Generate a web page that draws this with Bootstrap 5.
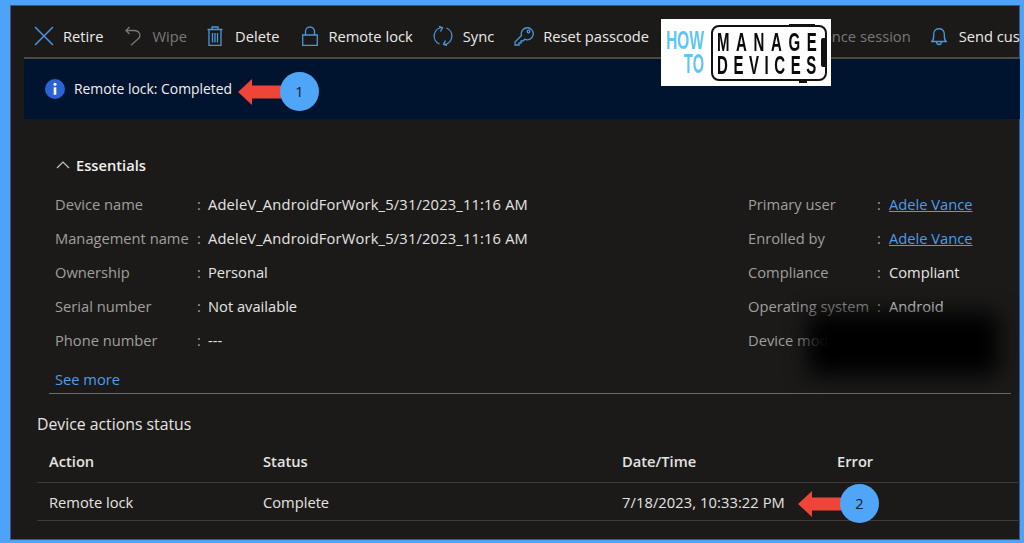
<!DOCTYPE html>
<html lang="en">
<head>
<meta charset="utf-8">
<title>Remote lock</title>
<link href="https://cdn.jsdelivr.net/npm/bootstrap@5.3.0/dist/css/bootstrap.min.css" rel="stylesheet">
<style>
html,body{height:100%;overflow:hidden}
body{background:#4da3f8;font-family:"Open Sans","Noto Sans",sans-serif;font-size:14.7px;color:#e6e4e2;padding:5px 4px 3px 10px}
.frame{position:relative;height:535px;background:#1b1a19;overflow:hidden;box-shadow:inset 0 0 0 1px #4a4f8a}
.tools{height:52px;padding-left:24px;padding-top:10px;white-space:nowrap;gap:20px;color:#eceae8}
.tool{gap:10px}
.tool.lead-tool{gap:9px;margin-right:1px}
.tool.slim{gap:12px}
.tool.lockish{margin-left:3px;gap:10px}
.tool.keyish{gap:9px}
.tool.hid{gap:8px}
.tool svg{flex:none}
.off{color:#7a7876}
.notice{margin-left:14px;height:62px;background:#01142f;border-top:2px solid #4b4a49;gap:9px;padding-left:21px;color:#f1f0ef;font-size:13.9px}
.ess{padding:34px 0 0 45px}
.ess-head{font-weight:600;gap:6px;height:24px;color:#f1f0ef}
.ess-head svg{margin-left:1px}
.ess-grid{margin-top:10px;width:950px}
.ess-col{flex:none}
.ess-col.one{width:693px}
.ess-row{height:34px;align-items:center}
.lab{color:#a19f9d}
.one .lab{width:142px}
.two .lab{width:129px}
.sep{width:11px;color:#a19f9d}
.two .sep{width:12px}
.nm{letter-spacing:.17px}
.lnk{color:#4f9ce8}
.lnk-u{color:#4f9ce8;text-decoration:underline}
.more{height:25px;margin-top:11px;display:block;text-decoration:none}
.rule{height:1px;background:#6b6a69;margin:0 9px 0 39px}
.sect{font-size:15.8px;margin:19px 0 0 27px;line-height:22px;color:#e6e4e2}
.acts{margin:8px 0 0 27px;width:983px;table-layout:fixed;--bs-table-bg:transparent;--bs-table-color:#e6e4e2;--bs-table-border-color:#3b3a39;color:#e6e4e2}
.acts th,.acts td{padding:0 0 0 12px;vertical-align:middle;font-weight:400}
.acts th{height:39px;font-weight:600;padding-bottom:2px}
.acts td{height:38px;padding-top:2px}
.acts tr{border-color:#3b3a39}
.stamp{letter-spacing:.08px}
.logo{position:absolute;left:651px;top:14px;width:170px;height:67px;background:#fff;z-index:3;font-family:"Liberation Sans",sans-serif;font-weight:700;white-space:nowrap}
.how{flex:none;width:43px;padding-top:10px;color:#5fc5f3;text-align:right}
.how span{display:block;transform-origin:right center}
.how .w1{font-size:25px;line-height:23px;transform:scaleX(.62);margin-left:-18px}
.how .w2{font-size:28px;line-height:24px;transform:scaleX(.52)}
.phone{position:relative;margin:6px 4px 5px 7px;flex:none;width:116px;border:2.5px solid #111;border-radius:8px;color:#0a0a0a;font-size:25px;line-height:23px;padding:4px 0 0 4px}
.phone span{display:block;transform-origin:left center;transform:scaleX(.6)}
.phone .l1{letter-spacing:11px}
.phone .l2{letter-spacing:9.300px}
.notch{position:absolute;right:-1px;top:11px;width:5px;height:29px;background:#111;border-radius:2px 0 0 2px}
.nub{position:absolute;height:2px;background:#111}
.nub.up{left:76px;top:-3px;width:26px}
.nub.dn{left:86px;bottom:-4px;width:8px}
.blob{position:absolute;left:798px;top:308px;width:190px;height:62px;background:#000;filter:blur(11px);z-index:2}
.pin{position:absolute;z-index:4;color:#14202e}
.pin svg{display:block}
.pin-dot{width:39px;height:39px;border-radius:50%;background:#4fa5f7;margin-left:-1px;font-size:14.5px}
.pin-a{left:228px;top:67px}
.pin-b{left:788px;top:479px}
</style>
</head>
<body>
<div class="frame">
  <div class="tools d-flex align-items-center overflow-hidden">
    <div class="tool lead-tool d-flex align-items-center"><svg width="20" height="20" viewBox="0 0 20 20" fill="none" stroke="#4a96dc" stroke-width="1.5"><path d="M1 1l18 18M19 1L1 19"/></svg><span>Retire</span></div>
    <div class="tool slim d-flex align-items-center off"><svg width="16" height="20" viewBox="0 0 16 20" fill="none" stroke="#7a7876" stroke-width="1.3"><path d="M4.500 1L1 4.500 4.500 8M1 4.500H9C15 4.500 16.500 10 13 13L6 19.300"/></svg><span>Wipe</span></div>
    <div class="tool slim d-flex align-items-center"><svg width="16" height="20" viewBox="0 0 16 20" fill="none" stroke="#4a96dc" stroke-width="1.3"><path d="M.5 3.500h15M5 3.500V1h6v2.500M2 3.500v15.800h12V3.500M5.500 7v9.500M8 7v9.500M10.500 7v9.500"/></svg><span>Delete</span></div>
    <div class="tool lockish d-flex align-items-center"><svg width="16" height="20" viewBox="0 0 16 20" fill="none" stroke="#4a96dc" stroke-width="1.3"><path d="M.7 9h14.600v10.300H.7zM3.500 9V5.500a4.500 4.500 0 0 1 9 0V9"/></svg><span>Remote lock</span></div>
    <div class="tool d-flex align-items-center"><svg width="20" height="20" viewBox="0 0 20 20" fill="none" stroke="#4a96dc" stroke-width="1.3"><path d="M6.500 18A8.700 8.700 0 0 1 9.500 1.300M6 .3L9.500 1.800 7.500 5.500M13.500 2A8.700 8.700 0 0 1 10.500 18.700M14 19.700L10.500 18.200 12.500 14.500"/></svg><span>Sync</span></div>
    <div class="tool keyish d-flex align-items-center"><svg width="20" height="20" viewBox="0 0 20 20" fill="none" stroke="#4a96dc" stroke-width="1.3"><path d="M7.500 9.500L1 16v3h4v-2h2v-2h2l1.700-1.800a6 6 0 1 0-3.200-3.700z"/><circle cx="14.500" cy="5.500" r="1.300"/></svg><span>Reset passcode</span></div>
    <div class="tool hid d-flex align-items-center off"><svg width="20" height="20" viewBox="0 0 20 20" fill="none" stroke="#7a7876" stroke-width="1.300"><circle cx="10" cy="10" r="8"/></svg><span>New remote assistance session</span></div>
    <div class="tool slim d-flex align-items-center"><svg width="16" height="20" viewBox="0 0 16 20" fill="none" stroke="#4a96dc" stroke-width="1.3"><path d="M.7 15.500c2-1.500 2-3 2-7.500 0-7 10.600-7 10.600 0 0 4.500 0 6 2 7.500zM5.500 15.500c0 4 5 4 5 0"/></svg><span>Send custom notification</span></div>
  </div>

  <div class="notice d-flex align-items-center">
    <svg width="20" height="20" viewBox="0 0 20 20"><circle cx="10" cy="10" r="10" fill="#2a63d4"/><circle cx="10" cy="5.300" r="1.500" fill="#fff"/><path d="M8.700 8.300h2.600v7.500H8.700z" fill="#fff"/></svg>
    <span>Remote lock: Completed</span>
  </div>

  <div class="ess">
    <div class="ess-head d-flex align-items-center"><svg width="14" height="14" viewBox="0 0 14 14" fill="none" stroke="#c8c6c4" stroke-width="1.200"><path d="M1 10l6-6 6 6"/></svg><span>Essentials</span></div>
    <div class="ess-grid d-flex">
      <div class="ess-col one">
        <div class="ess-row d-flex"><span class="lab">Device name</span><span class="sep">:</span><span class="nm">AdeleV_AndroidForWork_5/31/2023_11:16 AM</span></div>
        <div class="ess-row d-flex"><span class="lab">Management name</span><span class="sep">:</span><span class="nm">AdeleV_AndroidForWork_5/31/2023_11:16 AM</span></div>
        <div class="ess-row d-flex"><span class="lab">Ownership</span><span class="sep">:</span><span>Personal</span></div>
        <div class="ess-row d-flex"><span class="lab">Serial number</span><span class="sep">:</span><span>Not available</span></div>
        <div class="ess-row d-flex"><span class="lab">Phone number</span><span class="sep">:</span><span>---</span></div>
      </div>
      <div class="ess-col two">
        <div class="ess-row d-flex"><span class="lab">Primary user</span><span class="sep">:</span><span class="lnk-u">Adele Vance</span></div>
        <div class="ess-row d-flex"><span class="lab">Enrolled by</span><span class="sep">:</span><span class="lnk-u">Adele Vance</span></div>
        <div class="ess-row d-flex"><span class="lab">Compliance</span><span class="sep">:</span><span>Compliant</span></div>
        <div class="ess-row d-flex"><span class="lab">Operating system</span><span class="sep">:</span><span>Android</span></div>
        <div class="ess-row d-flex"><span class="lab">Device model</span><span class="sep">:</span><span></span></div>
      </div>
    </div>
    <a class="lnk more" href="#">See more</a>
  </div>
  <div class="rule"></div>
  <div class="sect">Device actions status</div>
  <table class="table acts">
    <colgroup><col style="width:214px"><col style="width:359px"><col style="width:215px"><col></colgroup>
    <thead><tr><th>Action</th><th>Status</th><th>Date/Time</th><th>Error</th></tr></thead>
    <tbody><tr><td>Remote lock</td><td>Complete</td><td class="stamp">7/18/2023, 10:33:22 PM</td><td></td></tr></tbody>
  </table>

  <div class="blob"></div>

  <div class="logo d-flex">
    <div class="how"><span class="w1">HOW</span><span class="w2">TO</span></div>
    <div class="phone"><span class="l1">MANAGE</span><span class="l2">DEVICES</span><div class="notch"></div><div class="nub up"></div><div class="nub dn"></div></div>
  </div>

  <div class="pin pin-a d-flex align-items-center">
    <svg width="43" height="26" viewBox="0 0 43 26"><path d="M0 13L14 0v6.500h29v13H14V26z" fill="#ef4438"/></svg>
    <div class="pin-dot d-flex align-items-center justify-content-center">1</div>
  </div>
  <div class="pin pin-b d-flex align-items-center">
    <svg width="43" height="26" viewBox="0 0 43 26"><path d="M0 13L14 0v6.500h29v13H14V26z" fill="#ef4438"/></svg>
    <div class="pin-dot d-flex align-items-center justify-content-center">2</div>
  </div>
</div>
<script src="https://cdn.jsdelivr.net/npm/bootstrap@5.3.0/dist/js/bootstrap.bundle.min.js"></script>
</body>
</html>
